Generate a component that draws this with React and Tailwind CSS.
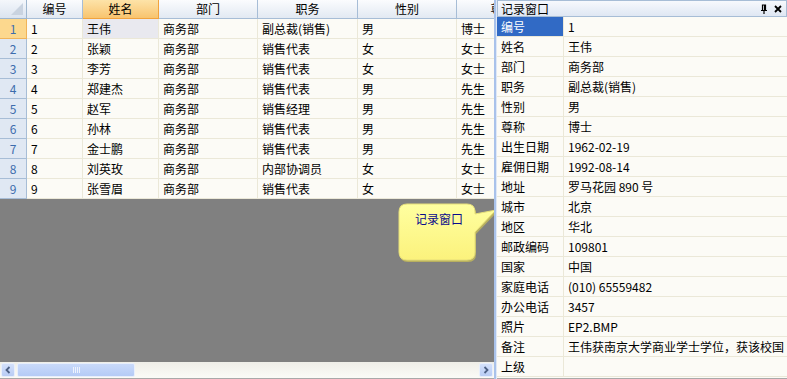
import React from "react";

const cols = [
  { key: "id", title: "编号", w: 56 },
  { key: "name", title: "姓名", w: 76 },
  { key: "dept", title: "部门", w: 99 },
  { key: "job", title: "职务", w: 100 },
  { key: "sex", title: "性别", w: 99 },
  { key: "t", title: "尊称", w: 92 },
];

const rows = [
  ["1", "王伟", "商务部", "副总裁(销售)", "男", "博士"],
  ["2", "张颖", "商务部", "销售代表", "女", "女士"],
  ["3", "李芳", "商务部", "销售代表", "女", "女士"],
  ["4", "郑建杰", "商务部", "销售代表", "男", "先生"],
  ["5", "赵军", "商务部", "销售经理", "男", "先生"],
  ["6", "孙林", "商务部", "销售代表", "男", "先生"],
  ["7", "金士鹏", "商务部", "销售代表", "男", "先生"],
  ["8", "刘英玫", "商务部", "内部协调员", "女", "女士"],
  ["9", "张雪眉", "商务部", "销售代表", "女", "女士"],
];

const record = [
  ["编号", "1"],
  ["姓名", "王伟"],
  ["部门", "商务部"],
  ["职务", "副总裁(销售)"],
  ["性别", "男"],
  ["尊称", "博士"],
  ["出生日期", "1962-02-19"],
  ["雇佣日期", "1992-08-14"],
  ["地址", "罗马花园 890 号"],
  ["城市", "北京"],
  ["地区", "华北"],
  ["邮政编码", "109801"],
  ["国家", "中国"],
  ["家庭电话", "(010) 65559482"],
  ["办公电话", "3457"],
  ["照片", "EP2.BMP"],
  ["备注", "王伟获南京大学商业学士学位，获该校国"],
  ["上级", ""],
];

const font = { fontFamily: "'Noto Sans CJK SC', 'DejaVu Sans', sans-serif" };

export default function App() {
  return (
    <div
      className="w-[787px] h-[379px] flex overflow-hidden bg-[#808080] text-[12px] leading-none text-black"
      style={font}
    >
      {/* Grid area */}
      <div className="w-[494px] h-[379px] flex flex-col relative shrink-0 overflow-hidden">
        {/* header */}
        <div className="flex h-[19px] shrink-0">
          <div className="w-[27px] h-[19px] border-r border-b border-[#9eb6ce] bg-gradient-to-b from-[#f4f7fb] to-[#dbe4f0] relative shrink-0">
            <svg className="absolute right-[3px] bottom-[3px]" width="12" height="12" viewBox="0 0 12 12">
              <polygon points="12,0 12,12 0,12" fill="#c9d3e0" />
            </svg>
          </div>
          {cols.map((c, i) => (
            <div
              key={c.key}
              className={
                "h-[19px] shrink-0 flex items-center justify-center border-r border-b " +
                (i === 1
                  ? "bg-gradient-to-b from-[#fde3a8] to-[#f8c46e] border-[#f2a33c]"
                  : "bg-gradient-to-b from-[#fbfcfe] to-[#e2e9f2] border-[#a7bdd6]")
              }
              style={{ width: c.w }}
            >
              {c.title}
            </div>
          ))}
        </div>
        {/* rows */}
        {rows.map((r, ri) => (
          <div key={ri} className="flex h-[20px] shrink-0">
            <div
              className={
                "w-[27px] h-[20px] shrink-0 flex items-center justify-center border-r border-b text-[#3d6cad] " +
                (ri === 0
                  ? "bg-[#fcd88e] border-[#f0b45a]"
                  : "bg-[#e0e8f3] border-[#a7bdd6]")
              }
            >
              {ri + 1}
            </div>
            {cols.map((c, ci) => (
              <div
                key={c.key}
                className={
                  "h-[20px] shrink-0 flex items-center pl-[4px] border-r border-b border-[#ebe8d8] whitespace-nowrap overflow-hidden " +
                  (ri === 0 && ci === 1 ? "bg-[#e9e9ef]" : "bg-[#fcfbf6]")
                }
                style={{ width: c.w }}
              >
                {r[ci]}
              </div>
            ))}
          </div>
        ))}
        <div className="flex-1" />
        {/* horizontal scrollbar */}
        <div className="h-[17px] shrink-0 bg-gradient-to-b from-[#efeee8] to-[#fbfbf7] flex items-center px-[1px] border-b border-[#a9a9a9]">
          <div className="w-[14px] h-[14px] rounded-[2px] bg-gradient-to-b from-[#d3e0fb] to-[#b9cdf5] border border-[#e8effc] flex items-center justify-center shrink-0">
            <svg width="8" height="8" viewBox="0 0 8 8">
              <path d="M5.5 1 L2.5 4 L5.5 7" stroke="#4d6185" strokeWidth="1.8" fill="none" />
            </svg>
          </div>
          <div className="ml-[2px] w-[118px] h-[14px] rounded-[2px] bg-gradient-to-b from-[#c9dafb] to-[#b5cbf6] border border-[#e8effc] flex items-center justify-center shrink-0">
            <svg width="7" height="6" viewBox="0 0 7 6">
              <path d="M0.5 0 V6 M2.5 0 V6 M4.5 0 V6 M6.5 0 V6" stroke="#eef3fd" strokeWidth="1" />
            </svg>
          </div>
          <div className="flex-1" />
          <div className="w-[14px] h-[14px] rounded-[2px] bg-gradient-to-b from-[#d3e0fb] to-[#b9cdf5] border border-[#e8effc] flex items-center justify-center shrink-0">
            <svg width="8" height="8" viewBox="0 0 8 8">
              <path d="M2.5 1 L5.5 4 L2.5 7" stroke="#4d6185" strokeWidth="1.8" fill="none" />
            </svg>
          </div>
        </div>

        {/* tooltip callout */}
        <div className="absolute left-[397px] top-[203px] w-[100px] h-[60px]">
          <svg width="100" height="60" viewBox="0 0 100 60" className="absolute left-0 top-0">
            <defs>
              <linearGradient id="yg" x1="0" y1="0" x2="0" y2="1">
                <stop offset="0" stopColor="#ffffa0" />
                <stop offset="1" stopColor="#fbf27c" />
              </linearGradient>
            </defs>
            <path
              d="M11 2 H71 Q79 2 79 10 V12 L100 8 L79 30 V50 Q79 58 71 58 H11 Q3 58 3 50 V10 Q3 2 11 2 Z"
              fill="#b8b060"
              transform="translate(0,1)"
            />
            <path
              d="M10 1 H70 Q78 1 78 9 V11 L99 7 L78 29 V49 Q78 57 70 57 H10 Q2 57 2 49 V9 Q2 1 10 1 Z"
              fill="url(#yg)"
              stroke="#e6df7a"
              strokeWidth="1"
            />
          </svg>
          <div className="absolute left-[18px] top-[10px] text-[#0a0a8c] text-[12px]">记录窗口</div>
        </div>
      </div>

      {/* splitter */}
      <div className="w-[3px] h-[379px] bg-[#a9c2ea] shrink-0 border-r border-[#dfe8f6]" />

      {/* Record window */}
      <div className="flex-1 min-w-0 h-[379px] flex flex-col bg-[#fcfbf6] border-b border-[#a9a9a9] overflow-hidden">
        <div className="h-[17px] shrink-0 flex items-center justify-between bg-gradient-to-b from-[#f7f9fd] to-[#dfe7f3] border border-[#a7bdd6] pl-[3px] pr-[4px]">
          <span>记录窗口</span>
          <div className="flex items-center gap-[6px]">
            <svg width="8" height="10" viewBox="0 0 8 10">
              <path d="M1 6.5 H7 M2.5 6.5 V1 H5.5 V6.5 M4 6.5 V10 M4.5 1 V6.5" stroke="#000" strokeWidth="1.2" fill="none" />
            </svg>
            <svg width="8" height="8" viewBox="0 0 8 8">
              <path d="M1 1 L7 7 M7 1 L1 7" stroke="#000" strokeWidth="1.8" />
            </svg>
          </div>
        </div>
        {record.map(([k, v], i) => (
          <div key={k} className="flex h-[20px] shrink-0 border-b border-[#ebe8d8]">
            <div
              className={
                "w-[67px] shrink-0 flex items-center pl-[4px] border-r border-[#ebe8d8] " +
                (i === 0 ? "bg-[#316ac5] text-white" : "")
              }
            >
              {k}
            </div>
            <div className="flex-1 min-w-0 flex items-center pl-[4px] whitespace-nowrap overflow-hidden">{v}</div>
          </div>
        ))}
      </div>
    </div>
  );
}
